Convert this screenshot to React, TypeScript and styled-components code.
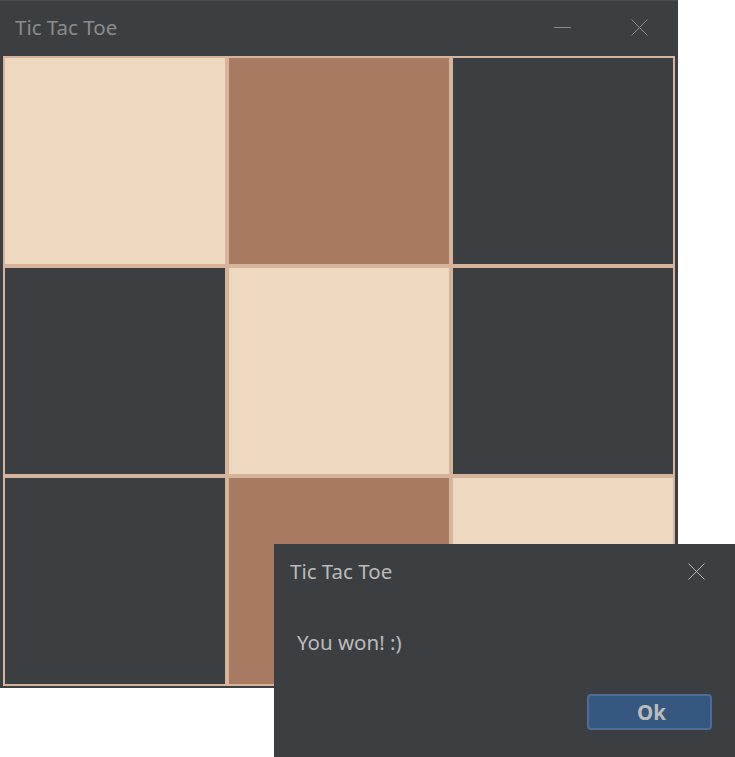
import styled, { createGlobalStyle } from "styled-components";

type Cell = "light" | "brown" | "dark";

const board: Cell[] = [
  "light", "brown", "dark",
  "dark", "light", "dark",
  "dark", "brown", "light",
];

const cellColors: Record<Cell, string> = {
  light: "#eed9c0",
  brown: "#a97a62",
  dark: "#3c3f41",
};

const GlobalStyle = createGlobalStyle`
  html, body {
    margin: 0;
    padding: 0;
    background: #ffffff;
  }
  body {
    width: 735px;
    height: 757px;
    overflow: hidden;
    position: relative;
    font-family: "Noto Sans", "Open Sans", sans-serif;
  }
`;

const Window = styled.div`
  width: 678px;
  height: 688px;
  display: flex;
  flex-direction: column;
  background: #3c3f41;
  border-top: 1px solid #4b4e50;
  box-sizing: border-box;
`;

const TitleBar = styled.div`
  height: 55px;
  display: flex;
  align-items: center;
  padding-left: 15px;
  padding-bottom: 2px;
  box-sizing: border-box;
`;

const Title = styled.span<{ $active?: boolean }>`
  flex: 1;
  font-size: 20.5px;
  line-height: 27px;
  color: ${(p) => (p.$active ? "#bbbbbb" : "#8c8c8c")};
`;

const Control = styled.div`
  width: 77px;
  height: 100%;
  display: flex;
  align-items: center;
  justify-content: center;
`;

const Board = styled.div`
  margin: 0 3px;
  padding: 2px;
  display: grid;
  grid-template-columns: repeat(3, 220px);
  grid-template-rows: repeat(3, 206px);
  gap: 4px;
  background: #d5b49b;
`;

const Square = styled.div<{ $kind: Cell }>`
  background: ${(p) => cellColors[p.$kind]};
`;

const Dialog = styled.div`
  position: absolute;
  left: 274px;
  top: 544px;
  width: 461px;
  height: 213px;
  background: #3c3f41;
  display: flex;
  flex-direction: column;
`;

const DialogBar = styled.div`
  height: 56px;
  display: flex;
  align-items: center;
  padding-left: 16px;
  padding-bottom: 1px;
  box-sizing: border-box;
`;

const DialogBody = styled.div`
  padding: 0 23px;
  display: flex;
  flex-direction: column;
`;

const Message = styled.p`
  margin: 29px 0 0;
  font-size: 20.5px;
  line-height: 27px;
  color: #bbbbbb;
`;

const Buttons = styled.div`
  display: flex;
  justify-content: flex-end;
  margin-top: 38px;
`;

const OkButton = styled.button`
  width: 125px;
  height: 36px;
  box-sizing: border-box;
  border: 2px solid #4a6e98;
  border-radius: 4px;
  background: #365880;
  color: #bbbbbb;
  font-family: "Noto Sans", "Open Sans", sans-serif;
  font-size: 20.5px;
  font-weight: 700;
  padding: 0 0 0 4px;
`;

const Minimize = () => (
  <svg width="17" height="17" viewBox="0 0 17 17">
    <line x1="0" y1="8.5" x2="17" y2="8.5" stroke="#8c8c8c" strokeWidth="1" />
  </svg>
);

const Close = ({ color }: { color: string }) => (
  <svg width="17" height="17" viewBox="0 0 17 17">
    <path d="M0.5 0.5 L16.5 16.5 M16.5 0.5 L0.5 16.5" stroke={color} strokeWidth="1" fill="none" />
  </svg>
);

export default function App() {
  return (
    <>
      <GlobalStyle />
      <Window>
        <TitleBar>
          <Title>Tic Tac Toe</Title>
          <Control>
            <Minimize />
          </Control>
          <Control>
            <Close color="#8c8c8c" />
          </Control>
        </TitleBar>
        <Board>
          {board.map((c, i) => (
            <Square key={i} $kind={c} />
          ))}
        </Board>
      </Window>
      <Dialog>
        <DialogBar>
          <Title $active>Tic Tac Toe</Title>
          <Control>
            <Close color="#bbbbbb" />
          </Control>
        </DialogBar>
        <DialogBody>
          <Message>You won! :)</Message>
          <Buttons>
            <OkButton>Ok</OkButton>
          </Buttons>
        </DialogBody>
      </Dialog>
    </>
  );
}
